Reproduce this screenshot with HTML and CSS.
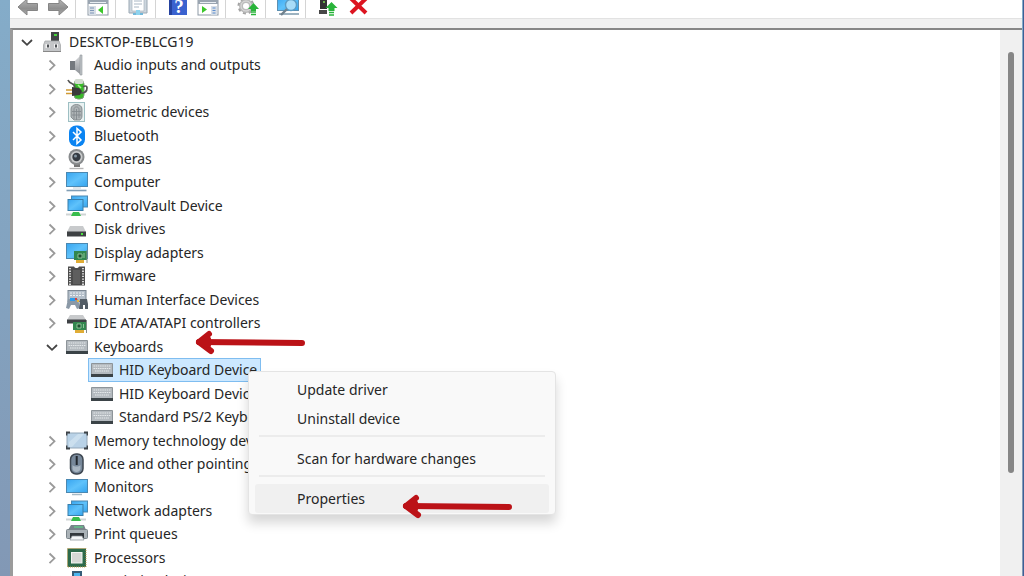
FILE: index.html
```html
<!DOCTYPE html>
<html lang="en">
  <head>
    <meta charset="UTF-8" />
    <meta name="viewport" content="width=device-width, initial-scale=1.0" />
    <title>Device Manager</title>
    <link rel="stylesheet" href="styles.css">
  </head>
  <body>
    <svg class="sprite" aria-hidden="true">
      <defs>
        <linearGradient id="screen" x1="0" y1="0" x2="1" y2="1">
          <stop offset="0" stop-color="#37a5f0" />
          <stop offset="0.5" stop-color="#5fc2fb" />
          <stop offset="1" stop-color="#35a4ee" />
        </linearGradient>
        <linearGradient id="metal" x1="0" y1="0" x2="0" y2="1">
          <stop offset="0" stop-color="#d6d8da" />
          <stop offset="1" stop-color="#8d9196" />
        </linearGradient>
        <linearGradient id="arrowGray" x1="0" y1="0" x2="0" y2="1">
          <stop offset="0" stop-color="#b5b5b5" />
          <stop offset="0.6" stop-color="#8f8f8f" />
          <stop offset="1" stop-color="#a9a9a9" />
        </linearGradient>
      </defs>

      <!-- chevrons -->
      <symbol id="right" viewBox="0 0 20 20"><path d="M7.5 5.5l5 4.8-5 4.8" fill="none" stroke="#9a9a9a" stroke-width="1.8" /></symbol>
      <symbol id="down" viewBox="0 0 20 20"><path d="M5 8l5 4.8L15 8" fill="none" stroke="#444" stroke-width="1.8" /></symbol>

      <!-- toolbar -->
      <symbol id="back" viewBox="0 0 22 22"><path d="M1 11L10 3v4.500h10.500v7H10V19z" fill="url(#arrowGray)" stroke="#858585" stroke-width="1" /></symbol>
      <symbol id="forward" viewBox="0 0 22 22"><path d="M21 11L12 3v4.500H1.500v7H12V19z" fill="url(#arrowGray)" stroke="#858585" stroke-width="1" /></symbol>
      <symbol id="console" viewBox="0 0 22 22">
        <rect x="1" y="1" width="20" height="18" fill="#fff" stroke="#8d99a6" />
        <path d="M1 1h20v7H1z" fill="#9aa5b1" />
        <path d="M3 6.500h16" stroke="#e8edf2" />
        <path d="M2 10h7v9H2z" fill="#d7dee6" />
        <path d="M3 12h4M3 14.500h4M3 17h4" stroke="#7e96b8" />
        <path d="M16 10v8l-5-4z" fill="#3cc72c" />
      </symbol>
      <symbol id="sheet" viewBox="0 0 22 22">
        <path d="M2 0h18v17H2z" fill="#cdd6de" stroke="#9ba8b3" />
        <path d="M5 0h12v15H5z" fill="#fff" stroke="#a9b5bf" stroke-width="0.700" />
        <path d="M7 5h8M7 8h8M7 11h5" stroke="#a9b7c4" />
        <path d="M6 18h10" stroke="#72b8da" stroke-width="2" />
        <path d="M9 14h4v5H9z" fill="#8ed3ee" />
      </symbol>
      <symbol id="help" viewBox="0 0 22 22">
        <rect x="2" y="0" width="18" height="19" fill="#3a62cf" />
        <path d="M2 0h3v19H2z" fill="#25429f" />
        <text x="12" y="17" class="helpMark">?</text>
      </symbol>
      <symbol id="action" viewBox="0 0 22 22">
        <rect x="1" y="1" width="20" height="18" fill="#fff" stroke="#8d99a6" />
        <path d="M1 1h20v7H1z" fill="#9aa5b1" />
        <path d="M3 6.500h16" stroke="#e8edf2" />
        <path d="M14 10h6v9h-6z" fill="#d7dee6" />
        <path d="M15.500 12h3M15.500 14.500h3M15.500 17h3" stroke="#5d8ed0" />
        <path d="M5 10v7l5-3.500z" fill="#3cc72c" />
      </symbol>
      <symbol id="updateGear" viewBox="0 0 22 22">
        <circle cx="9" cy="10" r="5" fill="none" stroke="#bcbcbc" stroke-width="4" />
        <circle cx="9" cy="10" r="7.500" fill="none" stroke="#a3a3a3" stroke-width="2" stroke-dasharray="3 2.900" />
        <circle cx="9" cy="10" r="5" fill="none" stroke="#dedede" />
        <path d="M16.500 7l5.500 6h-3v2h-5v-2h-3z" fill="#29b43a" />
        <path d="M14 16h5M14 18.500h5" stroke="#29b43a" stroke-width="1.600" />
      </symbol>
      <symbol id="scan" viewBox="0 0 22 22">
        <rect x="0.500" y="0.500" width="21" height="14" fill="url(#screen)" stroke="#5d90b2" />
        <path d="M2 18h20" stroke="#9cb2c0" stroke-width="2" />
        <circle cx="14" cy="9" r="5.500" fill="#a8dcf8" stroke="#5c9cc4" stroke-width="1.400" />
        <path d="M10 13l-6 6" stroke="#71818d" stroke-width="2.400" />
      </symbol>
      <symbol id="deviceUp" viewBox="0 0 22 22">
        <path d="M3 0h7v13H3z" fill="#333" />
        <path d="M2 14h8v4H2z" fill="#474747" />
        <circle cx="7" cy="6" r="1" fill="#7bdc55" />
        <path d="M14.500 6l6 6h-3v3h-6v-3h-3z" fill="#29b43a" />
        <path d="M12 16.500h5M12 19h5" stroke="#29b43a" stroke-width="1.600" />
      </symbol>
      <symbol id="remove" viewBox="0 0 22 22"><path d="M4 2.500L19 17M19 2.500L4 17" stroke="#dc1420" stroke-width="4" /></symbol>

      <!-- device classes -->
      <symbol id="pc" viewBox="0 0 22 22">
        <path d="M10 1h8v10h-8z" fill="#414447" />
        <path d="M13 3h3v2h-3z" fill="#45d339" />
        <path d="M4 10h14l1.500 4v6.500h-17V14z" fill="#c4c6c8" stroke="#a6a8aa" stroke-width="0.800" />
        <path d="M4.500 13h4v4h-4zM13 13h4v4h-4z" fill="#f1f1f1" />
        <path d="M6 13.500h2v3H6zM14 13.500h2v3h-2z" fill="#4d5155" />
        <path d="M2 20.500h18" stroke="#888" />
      </symbol>
      <symbol id="audio" viewBox="0 0 22 22">
        <path d="M4 7h5v9H4z" fill="#74797e" />
        <path d="M9 7l6-6v20l-6-5z" fill="url(#metal)" />
        <path d="M14 1h2v20h-2z" fill="#bfc4c8" stroke="#92979b" stroke-width="0.600" />
      </symbol>
      <symbol id="battery" viewBox="0 0 22 22">
        <rect x="8" y="2" width="10" height="19" rx="4" fill="#38b928" stroke="#7d9a78" />
        <rect x="8.500" y="1" width="9" height="5" rx="2" fill="#d3dcd0" />
        <path d="M2 2c2 5 6 2 7 7M15 15c4 0 6-2 6-5s-3-2-4-1" fill="none" stroke="#555" stroke-width="1.700" />
        <path d="M6 9l7 1 3 3-2 4-8 1z" fill="#3a3a3a" />
        <path d="M0 12h6M0 15.500h6" stroke="#d09a35" stroke-width="1.600" />
        <path d="M12 7l3 3" stroke="#a7f38e" stroke-width="1.500" />
      </symbol>
      <symbol id="finger" viewBox="0 0 22 22">
        <rect x="2.500" y="1.500" width="16" height="19" fill="#eaf2f2" stroke="#9dbfc3" />
        <path d="M5 16V8c0-6 11-6 11 0v7c0 2-1 3-2 4H8z" fill="#aeb4b6" stroke="#788084" stroke-width="0.800" />
        <path d="M8 18V8.500c0-3.500 5-3.500 5 0V17M10.500 8v11M6 10.500h9M6 14h9" fill="none" stroke="#838b8e" stroke-width="0.900" />
      </symbol>
      <symbol id="bluetooth" viewBox="0 0 22 22">
        <rect x="3" y="0.500" width="16" height="21" rx="7" fill="#0a84f2" />
        <path d="M7 7l8 8-4 3.500V3.500L15 7l-8 8" fill="none" stroke="#fff" stroke-width="1.500" />
      </symbol>
      <symbol id="camera" viewBox="0 0 22 22">
        <path d="M8 15h6v4H8z" fill="#777" />
        <path d="M3.500 20.500h14" stroke="#b5b5b5" stroke-width="1.400" />
        <circle cx="10.500" cy="9" r="8" fill="#888b8d" />
        <circle cx="10.500" cy="9" r="6" fill="#c8cacb" />
        <circle cx="10.500" cy="9" r="4.200" fill="#353b42" />
        <circle cx="9.500" cy="8" r="1.500" fill="#8495a2" />
      </symbol>
      <symbol id="computer" viewBox="0 0 22 22">
        <rect x="0.500" y="1.500" width="21" height="14" fill="url(#screen)" stroke="#4b88b1" />
        <path d="M7 17h8" stroke="#d6dfe4" stroke-width="1.500" />
        <path d="M0.500 19.500h20" stroke="#819eb5" stroke-width="1.600" />
      </symbol>
      <symbol id="network" viewBox="0 0 22 22">
        <rect x="5.500" y="1" width="16" height="11" fill="url(#screen)" stroke="#4b88b1" />
        <rect x="2" y="4.500" width="15" height="11" fill="url(#screen)" stroke="#387eaa" />
        <path d="M0 18.500h20v2H0z" fill="#cfd4d5" />
        <path d="M5 21l2-4h6l2 4z" fill="#39bd4c" />
      </symbol>
      <symbol id="disk" viewBox="0 0 22 22">
        <path d="M4 8h13l3 6H1z" fill="#c8cacc" />
        <path d="M1 13.500h19v5H1z" fill="#3e4144" />
        <path d="M15 15h2v2h-2z" fill="#4be33c" />
      </symbol>
      <symbol id="display" viewBox="0 0 22 22">
        <rect x="0.500" y="1.500" width="21" height="15" fill="url(#screen)" stroke="#4b88b1" />
        <path d="M8 9h13v9H8z" fill="#33864f" />
        <path d="M12 12h4v4h-4zM18 11v5" fill="#1d4d2f" stroke="#a3d5a8" stroke-width="0.800" />
        <path d="M10 18h8v3h-8z" fill="#e0ad36" />
        <path d="M21 8v13" stroke="#858b88" />
      </symbol>
      <symbol id="firmware" viewBox="0 0 22 22">
        <path d="M2 1.500h6c1 2 4 2 5 0h6v19H2z" fill="#4c4c4c" />
        <path d="M4 3v17M17 3v17" stroke="#d5d5d5" stroke-width="2" stroke-dasharray="1.300 1.300" />
        <path d="M7 5h7v14H7z" fill="#5e5e5e" />
      </symbol>
      <symbol id="hid" viewBox="0 0 22 22">
        <rect x="2" y="1.500" width="18" height="11" fill="#b4bfca" stroke="#7b8793" />
        <path d="M4 4h14M4 6.500h14" stroke="#edf1f4" stroke-dasharray="2 1" />
        <path d="M0 19l2-9h10l2 9-3 1-2-4H5l-2 4z" fill="#8b99a7" />
        <path d="M14 10h7l1 5v5h-3v-4h-2v4h-4z" fill="#535d66" />
        <path d="M4 9h5v3H4z" fill="#2e9bea" />
        <path d="M9 9h2v2H9z" fill="#d34242" />
        <path d="M11 11h2v2h-2z" fill="#eab73a" />
      </symbol>
      <symbol id="ide" viewBox="0 0 22 22">
        <path d="M4 3h13l3 5H1z" fill="#c8cacc" />
        <path d="M1 7.500h19v4H1z" fill="#3e4144" />
        <path d="M7 10h13v8H7z" fill="#33864f" />
        <path d="M11 12h4v4h-4zM17.500 12v4" fill="#1d4d2f" stroke="#a3d5a8" stroke-width="0.800" />
        <path d="M9 18h9v3H9z" fill="#e0ad36" />
        <path d="M20.500 8v13" stroke="#858b88" />
      </symbol>
      <symbol id="keyboard" viewBox="0 0 22 22">
        <path d="M0.500 4.500h21v11h-21z" fill="#b4babf" stroke="#8d9499" />
        <path d="M2.500 7h17M2.500 9.500h17M4 12h14" stroke="#e6eaec" stroke-width="1" stroke-dasharray="1.500 0.700" />
        <path d="M0 15h22v3H0z" fill="#3b4347" />
      </symbol>
      <symbol id="memory" viewBox="0 0 22 22">
        <rect x="1" y="3" width="20" height="15" rx="1" fill="#b9d2e7" stroke="#93a7b8" />
        <path d="M0.500 5.500V2.500H4M18 2.500h3.500V5.500M21.500 15.500v3H18M4 18.500H0.500V15.500" fill="none" stroke="#3d4348" stroke-width="1.800" />
        <path d="M3 12l9-8h6L6 17H3z" fill="#d7e7f4" opacity="0.600" />
      </symbol>
      <symbol id="mouse" viewBox="0 0 22 22">
        <rect x="4.500" y="1" width="12.500" height="20" rx="5.500" fill="#77889a" stroke="#3e4751" stroke-width="1.500" />
        <path d="M6.500 12c2 2 6 2 8 0v4c-1 4-7 4-8 0z" fill="#a9b6c2" />
        <path d="M10.700 3v9" stroke="#22282e" stroke-width="2" />
      </symbol>
      <symbol id="monitor" viewBox="0 0 22 22">
        <rect x="0.500" y="3.500" width="21" height="13" fill="url(#screen)" stroke="#4b88b1" />
        <path d="M6 18.500h10" stroke="#a8bbc6" stroke-width="1.500" />
      </symbol>
      <symbol id="printer" viewBox="0 0 22 22">
        <path d="M5 2h13l2 5H2z" fill="#78848a" />
        <path d="M8 4h9" stroke="#62c987" stroke-width="1.400" />
        <rect x="0.500" y="6.500" width="21" height="9" rx="1" fill="#aab2b7" stroke="#7a848a" />
        <path d="M4 10h14v5H4z" fill="#33383c" />
        <path d="M6 13h10l2 4H4z" fill="#f4f6f7" stroke="#858d92" stroke-width="0.700" />
      </symbol>
      <symbol id="cpu" viewBox="0 0 22 22">
        <rect x="1.500" y="1.500" width="18.500" height="18.500" fill="#2d6a4b" stroke="#c29a4b" stroke-width="1" stroke-dasharray="1 1" />
        <rect x="5.500" y="5.500" width="10.500" height="10.500" fill="#d6d8d5" stroke="#f2f4f1" />
      </symbol>
      <symbol id="proximity" viewBox="0 0 22 22">
        <rect x="6" y="1" width="10" height="18" fill="#355d78" />
        <rect x="8" y="3" width="6" height="12" fill="#4bb5ee" />
      </symbol>
    </svg>

    <div class="window">
      <div class="toolbar">
        <button aria-label="Back"><svg><use href="#back" /></svg></button>
        <button aria-label="Forward"><svg><use href="#forward" /></svg></button>
        <span class="divider"></span>
        <button aria-label="Show console tree"><svg><use href="#console" /></svg></button>
        <span class="divider"></span>
        <button aria-label="Properties sheet"><svg><use href="#sheet" /></svg></button>
        <span class="divider"></span>
        <button aria-label="Help"><svg><use href="#help" /></svg></button>
        <button aria-label="Action pane"><svg><use href="#action" /></svg></button>
        <span class="divider"></span>
        <button aria-label="Update device"><svg><use href="#updateGear" /></svg></button>
        <span class="divider"></span>
        <button aria-label="Scan"><svg><use href="#scan" /></svg></button>
        <span class="divider"></span>
        <button aria-label="Enable"><svg><use href="#deviceUp" /></svg></button>
        <button aria-label="Remove"><svg><use href="#remove" /></svg></button>
      </div>

      <div class="panel">
        <ul class="tree">
          <li class="root"><button aria-label="Collapse"><svg><use href="#down" /></svg></button><svg class="icon"><use href="#pc" /></svg><span>DESKTOP-EBLCG19</span></li>
          <li><button aria-label="Expand"><svg><use href="#right" /></svg></button><svg class="icon"><use href="#audio" /></svg><span>Audio inputs and outputs</span></li>
          <li><button aria-label="Expand"><svg><use href="#right" /></svg></button><svg class="icon"><use href="#battery" /></svg><span>Batteries</span></li>
          <li><button aria-label="Expand"><svg><use href="#right" /></svg></button><svg class="icon"><use href="#finger" /></svg><span>Biometric devices</span></li>
          <li><button aria-label="Expand"><svg><use href="#right" /></svg></button><svg class="icon"><use href="#bluetooth" /></svg><span>Bluetooth</span></li>
          <li><button aria-label="Expand"><svg><use href="#right" /></svg></button><svg class="icon"><use href="#camera" /></svg><span>Cameras</span></li>
          <li><button aria-label="Expand"><svg><use href="#right" /></svg></button><svg class="icon"><use href="#computer" /></svg><span>Computer</span></li>
          <li><button aria-label="Expand"><svg><use href="#right" /></svg></button><svg class="icon"><use href="#network" /></svg><span>ControlVault Device</span></li>
          <li><button aria-label="Expand"><svg><use href="#right" /></svg></button><svg class="icon"><use href="#disk" /></svg><span>Disk drives</span></li>
          <li><button aria-label="Expand"><svg><use href="#right" /></svg></button><svg class="icon"><use href="#display" /></svg><span>Display adapters</span></li>
          <li><button aria-label="Expand"><svg><use href="#right" /></svg></button><svg class="icon"><use href="#firmware" /></svg><span>Firmware</span></li>
          <li><button aria-label="Expand"><svg><use href="#right" /></svg></button><svg class="icon"><use href="#hid" /></svg><span>Human Interface Devices</span></li>
          <li><button aria-label="Expand"><svg><use href="#right" /></svg></button><svg class="icon"><use href="#ide" /></svg><span>IDE ATA/ATAPI controllers</span></li>
          <li><button aria-label="Collapse"><svg><use href="#down" /></svg></button><svg class="icon"><use href="#keyboard" /></svg><span>Keyboards</span></li>
          <li class="device selected"><svg class="icon"><use href="#keyboard" /></svg><span>HID Keyboard Device</span></li>
          <li class="device"><svg class="icon"><use href="#keyboard" /></svg><span>HID Keyboard Device</span></li>
          <li class="device"><svg class="icon"><use href="#keyboard" /></svg><span>Standard PS/2 Keyboard</span></li>
          <li><button aria-label="Expand"><svg><use href="#right" /></svg></button><svg class="icon"><use href="#memory" /></svg><span>Memory technology devices</span></li>
          <li><button aria-label="Expand"><svg><use href="#right" /></svg></button><svg class="icon"><use href="#mouse" /></svg><span>Mice and other pointing devices</span></li>
          <li><button aria-label="Expand"><svg><use href="#right" /></svg></button><svg class="icon"><use href="#monitor" /></svg><span>Monitors</span></li>
          <li><button aria-label="Expand"><svg><use href="#right" /></svg></button><svg class="icon"><use href="#network" /></svg><span>Network adapters</span></li>
          <li><button aria-label="Expand"><svg><use href="#right" /></svg></button><svg class="icon"><use href="#printer" /></svg><span>Print queues</span></li>
          <li><button aria-label="Expand"><svg><use href="#right" /></svg></button><svg class="icon"><use href="#cpu" /></svg><span>Processors</span></li>
          <li><button aria-label="Expand"><svg><use href="#right" /></svg></button><svg class="icon"><use href="#proximity" /></svg><span>Proximity devices</span></li>
        </ul>
        <div class="scrollbar"><div class="thumb"></div></div>
      </div>
    </div>

    <div class="menu" role="menu">
      <button role="menuitem">Update driver</button>
      <button role="menuitem">Uninstall device</button>
      <hr />
      <button role="menuitem">Scan for hardware changes</button>
      <hr />
      <button role="menuitem" class="active">Properties</button>
    </div>

    <svg class="pointer pointKeyboards" viewBox="0 0 112 26"><path d="M108 13L5 12" /><path d="M15 4L5 12l12 9" /><path d="M5 12L14 9v6z" /></svg>
    <svg class="pointer pointProperties" viewBox="0 0 112 26"><path d="M108 13L5 12" /><path d="M15 4L5 12l12 9" /><path d="M5 12L14 9v6z" /></svg>
  </body>
</html>
```
FILE: styles.css
```css
* {
  box-sizing: border-box;
}
body {
  margin: 0;
  height: 100vh;
  overflow: hidden;
  position: relative;
  padding: 0 1px 0 10px;
  background: linear-gradient(#84acc9, #8298b5);
  border-right: 1px solid #3c5f96;
  font-family: "Noto Sans", "Open Sans", sans-serif;
  font-size: 14px;
  color: #262626;
}
button {
  border: 0;
  padding: 0;
  background: none;
  font: inherit;
  color: inherit;
}
.sprite {
  position: absolute;
  width: 0;
  height: 0;
}
.helpMark {
  font: bold 19px "Liberation Serif", serif;
  fill: #fff;
  text-anchor: middle;
}
.window {
  height: 100%;
  display: flex;
  flex-direction: column;
  background: #f0f0f0;
}

/* toolbar */
.toolbar {
  display: flex;
  align-items: flex-end;
  height: 19px;
  flex: none;
  padding-left: 3px;
  overflow: hidden;
  background: #fff;
  border-bottom: 1px solid #e2e2e2;
}
.toolbar button {
  width: 30px;
  height: 22px;
  flex: none;
}
.toolbar svg {
  display: block;
  width: 22px;
  height: 22px;
  margin: 0 auto;
}
.divider {
  width: 1px;
  height: 22px;
  margin: 0 7px 0 2px;
  background: #d4d4d4;
}

/* device tree */
.panel {
  flex: 1;
  min-height: 0;
  display: flex;
  margin-top: 9px;
  border-top: 2px solid #868686;
  border-left: 3px solid #9b9b9b;
  overflow: hidden;
}
.tree {
  flex: 1;
  height: 563px;
  margin: 0;
  padding: 0 0 0 4px;
  display: grid;
  grid-auto-rows: 1fr;
  list-style: none;
  background: #fff;
}
.tree li {
  display: flex;
  align-items: center;
  justify-self: start;
  margin-left: 25px;
  line-height: 20px;
  white-space: nowrap;
}
.tree .root {
  margin-left: 0;
}
.tree .device {
  margin-left: 71px;
  padding: 0 4px 0 3px;
}
.tree .selected {
  background: #cce8ff;
  box-shadow: inset 0 0 0 1px #7fbdf0;
}
.tree button {
  width: 20px;
  height: 20px;
  margin-right: 4px;
}
.tree button svg {
  display: block;
  width: 20px;
  height: 20px;
}
.icon {
  width: 22px;
  height: 22px;
  margin-right: 6px;
}
.scrollbar {
  width: 22px;
  padding: 22px 8px 0 8px;
  background: #f0f0f0;
}
.thumb {
  height: 421px;
  border-radius: 3px;
  background: #868686;
}

/* context menu */
.menu {
  position: absolute;
  left: 248px;
  top: 371px;
  width: 308px;
  padding: 3px 6px 1px;
  background: #f9f9f9;
  border: 1px solid #e4e4e4;
  border-radius: 4px;
  box-shadow: 0 8px 12px rgba(0, 0, 0, 0.16);
}
.menu button {
  display: block;
  width: 100%;
  height: 29px;
  padding-left: 42px;
  border-radius: 3px;
  text-align: left;
}
.menu .active {
  background: #f0f0f0;
}
.menu hr {
  height: 2px;
  margin: 2px 4px 7px;
  border: 0;
  background: #ececec;
}

/* red arrows */
.pointer {
  position: absolute;
  width: 112px;
  height: 26px;
  fill: none;
  stroke: #bb1217;
  stroke-width: 6;
  stroke-linecap: round;
  stroke-linejoin: round;
  pointer-events: none;
}
.pointKeyboards {
  left: 194px;
  top: 330px;
}
.pointProperties {
  left: 401px;
  top: 494px;
}
```
